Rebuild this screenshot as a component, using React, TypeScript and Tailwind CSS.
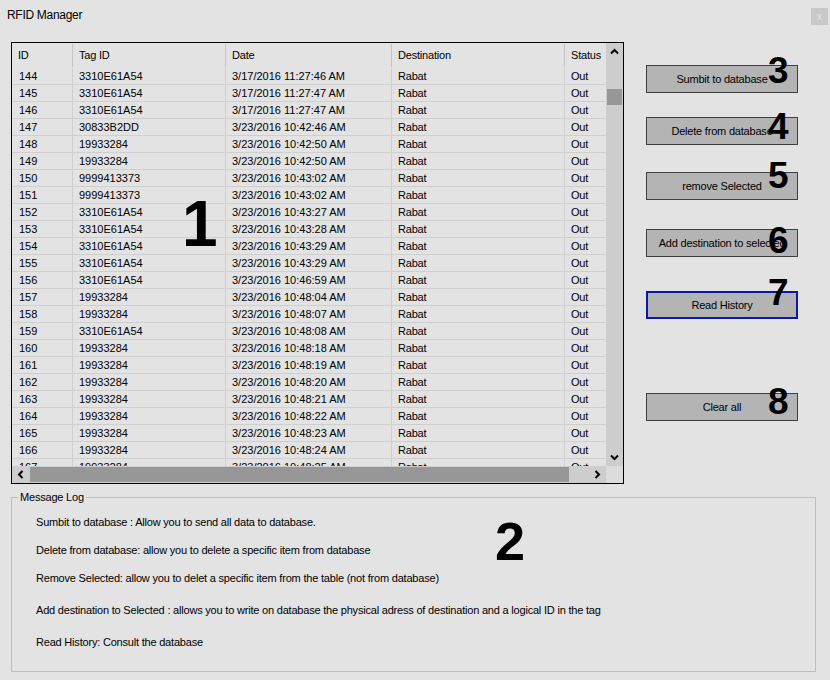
import React from 'react';

type Row = { id: number; tag: string; date: string };

const rows: Row[] = [
  { id: 144, tag: '3310E61A54', date: '3/17/2016 11:27:46 AM' },
  { id: 145, tag: '3310E61A54', date: '3/17/2016 11:27:47 AM' },
  { id: 146, tag: '3310E61A54', date: '3/17/2016 11:27:47 AM' },
  { id: 147, tag: '30833B2DD', date: '3/23/2016 10:42:46 AM' },
  { id: 148, tag: '19933284', date: '3/23/2016 10:42:50 AM' },
  { id: 149, tag: '19933284', date: '3/23/2016 10:42:50 AM' },
  { id: 150, tag: '9999413373', date: '3/23/2016 10:43:02 AM' },
  { id: 151, tag: '9999413373', date: '3/23/2016 10:43:02 AM' },
  { id: 152, tag: '3310E61A54', date: '3/23/2016 10:43:27 AM' },
  { id: 153, tag: '3310E61A54', date: '3/23/2016 10:43:28 AM' },
  { id: 154, tag: '3310E61A54', date: '3/23/2016 10:43:29 AM' },
  { id: 155, tag: '3310E61A54', date: '3/23/2016 10:43:29 AM' },
  { id: 156, tag: '3310E61A54', date: '3/23/2016 10:46:59 AM' },
  { id: 157, tag: '19933284', date: '3/23/2016 10:48:04 AM' },
  { id: 158, tag: '19933284', date: '3/23/2016 10:48:07 AM' },
  { id: 159, tag: '3310E61A54', date: '3/23/2016 10:48:08 AM' },
  { id: 160, tag: '19933284', date: '3/23/2016 10:48:18 AM' },
  { id: 161, tag: '19933284', date: '3/23/2016 10:48:19 AM' },
  { id: 162, tag: '19933284', date: '3/23/2016 10:48:20 AM' },
  { id: 163, tag: '19933284', date: '3/23/2016 10:48:21 AM' },
  { id: 164, tag: '19933284', date: '3/23/2016 10:48:22 AM' },
  { id: 165, tag: '19933284', date: '3/23/2016 10:48:23 AM' },
  { id: 166, tag: '19933284', date: '3/23/2016 10:48:24 AM' },
  { id: 167, tag: '19933284', date: '3/23/2016 10:48:25 AM' },
];

const logLines = [
  'Sumbit to database : Allow you to send all data to database.',
  'Delete from database: allow you to delete a specific item from database',
  'Remove Selected: allow you to delet a specific item from the table (not from database)',
  'Add destination to Selected : allows you to write on database the physical adress of destination and a logical ID in the tag',
  'Read History: Consult the database',
];

const cols = 'grid grid-cols-[61px_153px_166px_173px_60px]';

function Chevron({ dir }: { dir: 'up' | 'down' | 'left' | 'right' }) {
  const rot = { up: 0, right: 90, down: 180, left: 270 }[dir];
  return (
    <svg width="9" height="9" viewBox="0 0 9 9" style={{ transform: `rotate(${rot}deg)` }}>
      <path d="M1 6.5 L4.5 3 L8 6.5" fill="none" stroke="#000" strokeWidth="2" />
    </svg>
  );
}

function Button({ label, className = '', active = false }: { label: string; className?: string; active?: boolean }) {
  return (
    <div
      className={`flex h-[28px] w-[152px] items-center justify-center bg-[#b4b4b4] text-[11px] tracking-[-0.2px] text-black ${
        active ? 'border-2 border-[#0a18a6]' : 'border border-[#3f3f3f]'
      } ${className}`}
    >
      {label}
    </div>
  );
}

function Grid() {
  return (
    <div className="flex h-[442px] w-[613px] flex-col border border-black bg-[#e3e3e3]">
      <div className="flex h-[423px]">
        <div className="w-[594px] overflow-hidden">
          <div className={`${cols} h-[25px] items-center tracking-[-0.2px]`}>
            {['ID', 'Tag ID', 'Date', 'Destination', 'Status'].map((h, i) => (
              <div key={h} className="relative h-full pl-[6px] leading-[25px]">
                {h}
                {i < 4 && <span className="absolute right-0 top-[1px] h-[23px] w-px bg-[#c6c6c6]" />}
              </div>
            ))}
          </div>
          {rows.map((r) => (
            <div key={r.id} className={`${cols} h-[17px] border-b border-[#cfcfcf]`}>
              <div className="border-r border-[#cfcfcf] pl-[7px] leading-[16px]">{r.id}</div>
              <div className="border-r border-[#cfcfcf] pl-[6px] leading-[16px]">{r.tag}</div>
              <div className="border-r border-[#cfcfcf] pl-[6px] leading-[16px]">{r.date}</div>
              <div className="border-r border-[#cfcfcf] pl-[6px] leading-[16px] tracking-[-0.2px]">Rabat</div>
              <div className="pl-[6px] leading-[16px] tracking-[-0.2px]">Out</div>
            </div>
          ))}
        </div>
        <div className="flex w-[17px] flex-col bg-[#cdcdcd]">
          <div className="flex h-[17px] items-center justify-center">
            <Chevron dir="up" />
          </div>
          <div className="mx-auto mt-[29px] h-[16px] w-[15px] bg-[#979797]" />
          <div className="flex-1" />
          <div className="flex h-[17px] items-center justify-center">
            <Chevron dir="down" />
          </div>
        </div>
      </div>
      <div className="flex h-[17px]">
        <div className="flex w-[594px] bg-[#cdcdcd]">
          <div className="flex w-[17px] items-center justify-center">
            <Chevron dir="left" />
          </div>
          <div className="my-[1px] ml-[1px] w-[539px] bg-[#979797]" />
          <div className="flex-1" />
          <div className="flex w-[17px] items-center justify-center">
            <Chevron dir="right" />
          </div>
        </div>
        <div className="w-[17px] bg-[#dcdcdc]" />
      </div>
    </div>
  );
}

export default function App() {
  return (
    <div className="relative h-[680px] w-[830px] overflow-hidden bg-[#e3e3e3] font-['Liberation_Sans',Arial,sans-serif] text-[11px] text-black">
      <div className="flex h-[42px] items-start justify-between pl-[7px] pr-[2px] pt-[8px]">
        <span className="text-[12px] leading-[15px] tracking-[-0.3px]">RFID Manager</span>
        <div className="flex h-[17px] w-[17px] items-center justify-center bg-[#c8c8c8] text-[10px] leading-none text-[#e6e6e6]">
          x
        </div>
      </div>

      <div className="flex pl-[11px]">
        <Grid />
        <div className="ml-[22px] flex flex-col pt-[23px]">
          <Button label="Sumbit to database" />
          <Button label="Delete from database" className="mt-[24px]" />
          <Button label="remove Selected" className="mt-[27px]" />
          <Button label="Add destination to selected" className="mt-[29px]" />
          <Button label="Read History" className="mt-[34px]" active />
          <Button label="Clear all" className="mt-[74px]" />
        </div>
      </div>

      <fieldset className="ml-[11px] mt-[6px] h-[182px] w-[805px] border border-[#bdbdbd]">
        <legend className="ml-[6px] px-[2px] leading-[14px] tracking-[-0.2px]">Message Log</legend>
        <div className="flex flex-col pl-[24px] pt-[11px] tracking-[-0.2px]">
          {logLines.map((l, i) => (
            <div key={i} className={`leading-[14px] ${i === 0 ? '' : i >= 3 ? 'mt-[18px]' : 'mt-[14px]'}`}>
              {l}
            </div>
          ))}
        </div>
      </fieldset>

      {/* annotation numbers drawn over the form */}
      <span className="absolute left-[182px] top-[192px] text-[64px] font-bold leading-none">1</span>
      <span className="absolute left-[495px] top-[514px] text-[54px] font-bold leading-none">2</span>
      <span className="absolute left-[768px] top-[52px] text-[37px] font-bold leading-none">3</span>
      <span className="absolute left-[768px] top-[108px] text-[37px] font-bold leading-none">4</span>
      <span className="absolute left-[768px] top-[157px] text-[37px] font-bold leading-none">5</span>
      <span className="absolute left-[768px] top-[222px] text-[37px] font-bold leading-none">6</span>
      <span className="absolute left-[768px] top-[274px] text-[37px] font-bold leading-none">7</span>
      <span className="absolute left-[768px] top-[383px] text-[37px] font-bold leading-none">8</span>
    </div>
  );
}
